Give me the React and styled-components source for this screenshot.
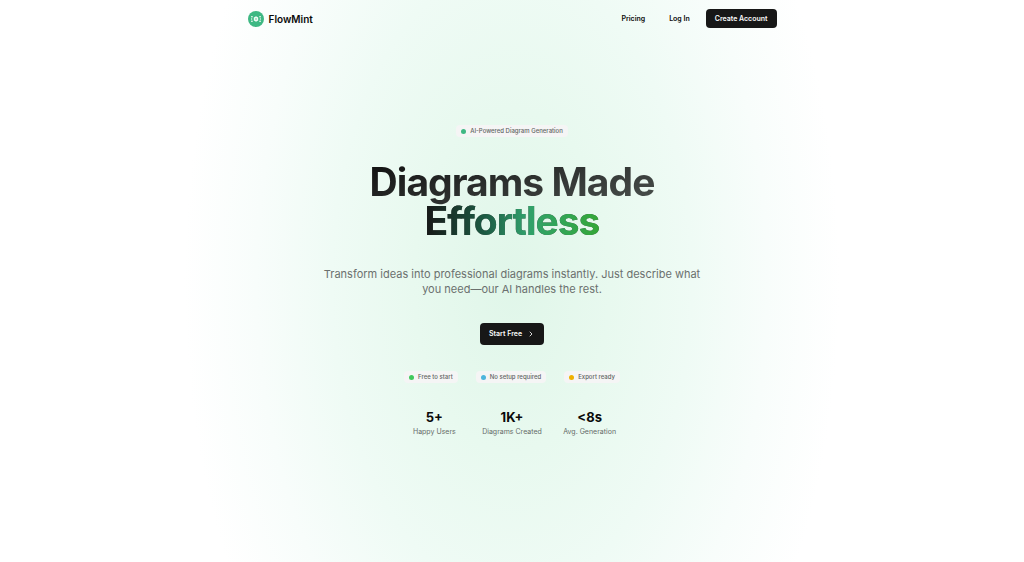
import React from "react";
import styled, { createGlobalStyle } from "styled-components";

const GlobalStyle = createGlobalStyle`
  *, *::before, *::after { box-sizing: border-box; }
  body { margin: 0; background: #fff; }
  body, button { font-family: Inter, "Liberation Sans", sans-serif; }
  h1, p, ul, dl, dd { margin: 0; padding: 0; }
`;

const Page = styled.div`
  min-height: 100vh;
  display: flex;
  flex-direction: column;
  color: #0a0a0a;
  background: radial-gradient(ellipse 32% 102% at 50% 50%,
    #e0f6e9 0%, #e8f9ef 30%, #effbf5 55%, #f8fdfb 78%, #fff 100%);
`;

const Header = styled.header`
  width: 100%;
  max-width: 545px;
  margin: 0 auto;
  padding: 9px 8px;
  display: flex;
  align-items: center;
  justify-content: space-between;
`;

const Brand = styled.a`
  display: flex;
  align-items: center;
  gap: 5px;
  color: inherit;
  font-size: 10px;
  font-weight: 600;
  line-height: 16px;
  text-decoration: none;
`;

const Nav = styled.nav`
  display: flex;
  align-items: center;
  gap: 24px;
`;

const NavLink = styled.a`
  color: inherit;
  font-size: 7px;
  font-weight: 600;
  line-height: 12px;
  text-decoration: none;
`;

const NavGroup = styled.div`
  display: flex;
  align-items: center;
  gap: 16px;
`;

const DarkButton = styled.button`
  display: flex;
  align-items: center;
  gap: 5px;
  height: ${(p) => (p.$large ? 22 : 19)}px;
  padding: 0 9px;
  border: 0;
  border-radius: 4px;
  background: #171717;
  color: #fafafa;
  font-size: 7px;
  font-weight: 600;
  line-height: 12px;
  white-space: nowrap;
  cursor: pointer;
`;

const Hero = styled.main`
  display: flex;
  flex-direction: column;
  align-items: center;
  padding: 88px 16px;
  text-align: center;
`;

const Badge = styled.span`
  display: inline-flex;
  align-items: center;
  gap: 4px;
  height: 12px;
  padding: 0 5px;
  border-radius: 4px;
  background: #f5f5f5;
  color: #5f6462;
  font-size: 6px;
  font-weight: 500;
  line-height: 12px;
  white-space: nowrap;
`;

const Dot = styled.i`
  width: 5px;
  height: 5px;
  border-radius: 50%;
  background: ${(p) => p.$color};
`;

const Title = styled.h1`
  margin-top: 25px;
  font-size: 39px;
  font-weight: 700;
  line-height: 39px;
  letter-spacing: -0.025em;
  background: linear-gradient(to bottom right, #111 0%, #454b48 70%);
  background-clip: text;
  -webkit-background-clip: text;
  color: transparent;
`;

const Accent = styled.span`
  background: linear-gradient(to right, #171717 0%, #1d5c44 35%, #31a06c 58%, #33a651 82%, #34a637 100%);
  background-clip: text;
  -webkit-background-clip: text;
`;

const Lead = styled.p`
  max-width: 384px;
  margin: 27px 0 26px;
  color: #6b706e;
  font-size: 11px;
  line-height: 15px;
`;

const Features = styled.ul`
  display: flex;
  gap: 18px;
  margin-top: 26px;
  list-style: none;

  li { display: flex; }
`;

const Stats = styled.dl`
  display: grid;
  grid-template-columns: repeat(3, 1fr);
  gap: 18px;
  margin-top: 25px;
`;

const Stat = styled.div`
  display: flex;
  flex-direction: column-reverse;
`;

const StatLabel = styled.dt`
  color: #656b68;
  font-size: 7px;
  line-height: 11px;
  white-space: nowrap;
`;

const StatValue = styled.dd`
  font-size: 13px;
  font-weight: 700;
  line-height: 18px;
`;

function Logo() {
  return (
    <svg width="16" height="16" viewBox="0 0 16 16" aria-hidden="true">
      <circle cx="8" cy="8" r="8" fill="#3eb883" />
      <g fill="#f0fbf5">
        <path d="M8 5.3 10.2 6.6V9.4L8 10.7 5.8 9.4V6.6Z" />
        <rect x="3" y="5.2" width="1.8" height="1.1" />
        <rect x="3" y="7.4" width="1.2" height="1.2" />
        <rect x="3" y="9.7" width="1.8" height="1.1" />
        <rect x="11.2" y="5.2" width="1.8" height="1.1" />
        <rect x="11.8" y="7.4" width="1.2" height="1.2" />
        <rect x="11.2" y="9.7" width="1.8" height="1.1" />
      </g>
      <circle cx="8" cy="8" r="0.7" fill="#3eb883" />
    </svg>
  );
}

function Chevron() {
  return (
    <svg width="8" height="8" viewBox="0 0 24 24" fill="none" stroke="currentColor" strokeWidth="2.5" strokeLinecap="round" strokeLinejoin="round" aria-hidden="true">
      <path d="m9 18 6-6-6-6" />
    </svg>
  );
}

const features = [
  ["Free to start", "#40c95c"],
  ["No setup required", "#4db5dc"],
  ["Export ready", "#efb100"],
];

const stats = [
  ["5+", "Happy Users"],
  ["1K+", "Diagrams Created"],
  ["<8s", "Avg. Generation"],
];

export default function App() {
  return (
    <Page>
      <GlobalStyle />
      <Header>
        <Brand href="#"><Logo />FlowMint</Brand>
        <NavGroup>
          <Nav>
            <NavLink href="#pricing">Pricing</NavLink>
            <NavLink href="#login">Log In</NavLink>
          </Nav>
          <DarkButton type="button">Create Account</DarkButton>
        </NavGroup>
      </Header>
      <Hero>
        <Badge><Dot $color="#3eb883" />AI-Powered Diagram Generation</Badge>
        <Title>
          Diagrams Made<br /><Accent>Effortless</Accent>
        </Title>
        <Lead>
          Transform ideas into professional diagrams instantly. Just describe what<br />
          you need—our AI handles the rest.
        </Lead>
        <DarkButton type="button" $large>Start Free<Chevron /></DarkButton>
        <Features>
          {features.map(([label, color]) => (
            <li key={label}><Badge><Dot $color={color} />{label}</Badge></li>
          ))}
        </Features>
        <Stats>
          {stats.map(([value, label]) => (
            <Stat key={label}>
              <StatLabel>{label}</StatLabel>
              <StatValue>{value}</StatValue>
            </Stat>
          ))}
        </Stats>
      </Hero>
    </Page>
  );
}
